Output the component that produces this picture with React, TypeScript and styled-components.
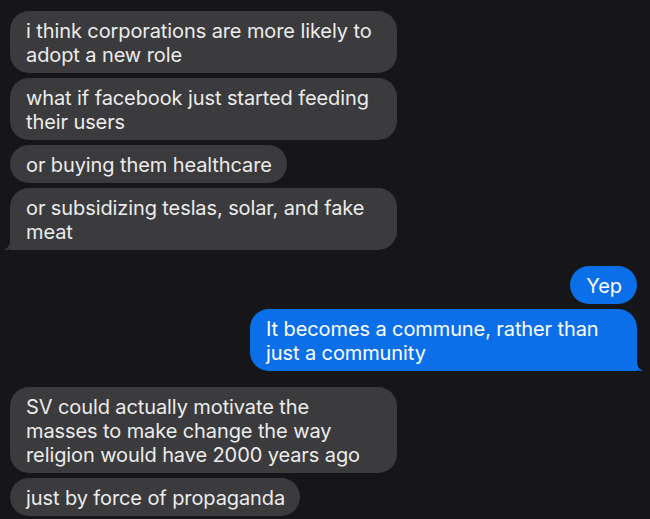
import React from "react";
import styled, { createGlobalStyle, css } from "styled-components";

const GlobalStyle = createGlobalStyle`
  html, body {
    margin: 0;
    padding: 0;
    background: #161618;
    overflow: hidden;
  }
  body {
    font-family: Inter, "Noto Sans", "Liberation Sans", sans-serif;
    -webkit-font-smoothing: antialiased;
  }
`;

const Thread = styled.div`
  width: 650px;
  height: 519px;
  box-sizing: border-box;
  padding: 11px 13px 0 10px;
  display: flex;
  flex-direction: column;
  overflow: hidden;
  background: #161618;
`;

const Group = styled.div<{ $mine?: boolean; $first?: boolean }>`
  display: flex;
  flex-direction: column;
  align-items: ${(p) => (p.$mine ? "flex-end" : "flex-start")};
  gap: 5px;
  margin-top: ${(p) => (p.$first ? "0" : "16px")};
`;

const Bubble = styled.div<{ $mine?: boolean; $tail?: boolean }>`
  position: relative;
  box-sizing: border-box;
  max-width: 387px;
  padding: 8px 15px 6px 16px;
  border-radius: 19px;
  font-size: 20px;
  line-height: 24px;
  letter-spacing: -0.1px;
  background: ${(p) => (p.$mine ? "#0b6fe9" : "#3b3b3d")};
  color: ${(p) => (p.$mine ? "#ffffff" : "#ececec")};
  ${(p) =>
    p.$tail &&
    css`
      border-bottom-${p.$mine ? "right" : "left"}-radius: 0;
    `}
`;

const Text = styled.span`
  position: relative;
  z-index: 1;
`;

const TailSvg = styled.svg<{ $mine?: boolean }>`
  position: absolute;
  bottom: 0;
  width: 24px;
  height: 24px;
  ${(p) =>
    p.$mine
      ? css`
          right: -6px;
          transform: scaleX(-1);
        `
      : css`
          left: -6px;
        `}
`;

function Tail({ mine, color }: { mine?: boolean; color: string }) {
  return (
    <TailSvg $mine={mine} viewBox="0 0 24 24" aria-hidden>
      <path
        d="M6 0 H24 V24 H15 C12.5 24 10.5 23.2 9 22 C6.5 23.6 3.5 24 0 24 C3.5 22.4 6 19.5 6 14 Z"
        fill={color}
      />
    </TailSvg>
  );
}

type Msg = { text: string; tail?: boolean };

function MessageGroup({
  mine,
  first,
  messages,
}: {
  mine?: boolean;
  first?: boolean;
  messages: Msg[];
}) {
  const color = mine ? "#0b6fe9" : "#3b3b3d";
  return (
    <Group $mine={mine} $first={first}>
      {messages.map((m, i) => (
        <Bubble key={i} $mine={mine} $tail={m.tail}>
          {m.tail && <Tail mine={mine} color={color} />}
          <Text>{m.text}</Text>
        </Bubble>
      ))}
    </Group>
  );
}

export default function App() {
  return (
    <>
      <GlobalStyle />
      <Thread>
        <MessageGroup
          first
          messages={[
            { text: "i think corporations are more likely to adopt a new role" },
            { text: "what if facebook just started feeding their users" },
            { text: "or buying them healthcare" },
            { text: "or subsidizing teslas, solar, and fake meat", tail: true },
          ]}
        />
        <MessageGroup
          mine
          messages={[
            { text: "Yep" },
            { text: "It becomes a commune, rather than just a community", tail: true },
          ]}
        />
        <MessageGroup
          messages={[
            {
              text: "SV could actually motivate the masses to make change the way religion would have 2000 years ago",
            },
            { text: "just by force of propaganda" },
          ]}
        />
      </Thread>
    </>
  );
}
